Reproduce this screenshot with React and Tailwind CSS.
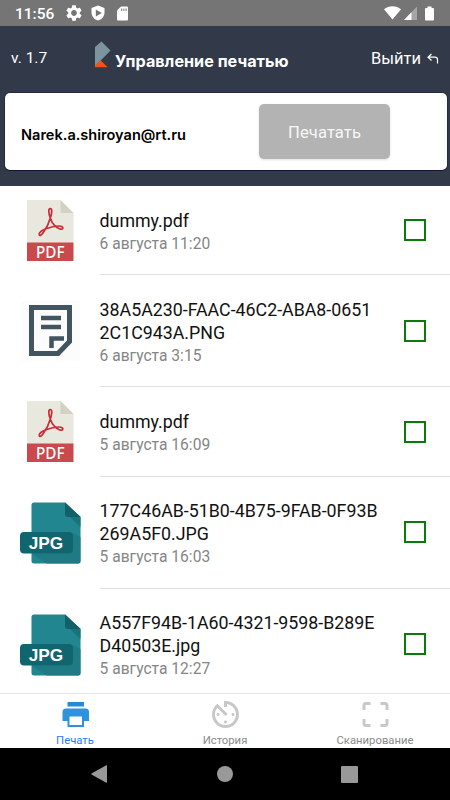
import { useState } from 'react';

const FILES = [
    { id: 1, type: 'pdf', lines: ['dummy.pdf'], date: '6 августа 11:20' },
    { id: 2, type: 'doc', lines: ['38A5A230-FAAC-46C2-ABA8-0651', '2C1C943A.PNG'], date: '6 августа 3:15' },
    { id: 3, type: 'pdf', lines: ['dummy.pdf'], date: '5 августа 16:09' },
    { id: 4, type: 'jpg', lines: ['177C46AB-51B0-4B75-9FAB-0F93B', '269A5F0.JPG'], date: '5 августа 16:03' },
    { id: 5, type: 'jpg', lines: ['A557F94B-1A60-4321-9598-B289E', 'D40503E.jpg'], date: '5 августа 12:27' },
];

function PdfIcon() {
    return (
        <svg className="w-[62px] h-[62px]" viewBox="0 0 62 62">
            <path d="M8 0H41.500L54.500 13V43H8z" fill="#e9e8df" />
            <path d="M41.500 0L54.500 13H41.500z" fill="#d2d1c2" />
            <path d="M8 42.500H54.500V61H8z" fill="#c9494c" />
            <path
                d="M31.300 18C29.500 13.500 29.200 8.500 31.200 8.500C33.500 8.500 33 13 31.300 18C30 23 26.500 29.500 24.300 32.500C22.500 35.300 20.800 36 20.300 34.800C19.500 32.800 23 30 27 28.700C31 27.200 36 26 39.500 26C43 26 44.300 27.200 43.700 28.500C42.800 30.200 38.500 28.300 35.800 25.700C33.500 23.500 32 20.300 31.300 18z"
                fill="none"
                stroke="#cb2c35"
                strokeWidth="1.700"
                strokeLinejoin="round"
            />
            <text x="31.200" y="57.800" textAnchor="middle" textLength="28.500" lengthAdjust="spacingAndGlyphs" fill="#fff" className="font-['Noto_Sans',sans-serif] text-[16px] font-medium">PDF</text>
        </svg>
    );
}

function DocIcon() {
    return (
        <svg className="w-[62px] h-[62px]" viewBox="0 0 62 62">
            <path d="M2 1H61V61H2z" fill="#fcfcfc" />
            <path d="M12.500 7.500H50.500V41.500L39 53.500H12.500z" fill="none" stroke="#41545f" strokeWidth="5" />
            <path d="M22 18H42M22 27H42M32.500 48V38.500H45" fill="none" stroke="#41545f" strokeWidth="4.500" />
        </svg>
    );
}

function JpgIcon() {
    return (
        <svg className="w-[62px] h-[62px]" viewBox="0 0 62 62">
            <path d="M15 0.500H46L61.500 15V59Q61.500 61.500 59 61.500H15Q12.500 61.500 12.500 59V3Q12.500 0.500 15 0.500z" fill="#21868f" />
            <path d="M54 31L61.500 35V59Q61.500 61.500 59 61.500H28L12.500 51.500H52Z" fill="#207a83" />
            <path d="M46 0.500L61.500 15V25L46.500 11z" fill="#1c727b" />
            <path d="M46 0.500L61.500 15H49Q46 15 46 12z" fill="#116069" />
            <rect x="1" y="30" width="53" height="21.500" rx="4" fill="#11656e" />
            <text x="27" y="46.700" textAnchor="middle" textLength="34.500" lengthAdjust="spacingAndGlyphs" fill="#fff" className="font-['Liberation_Sans',sans-serif] text-[17px] font-bold">JPG</text>
        </svg>
    );
}

const FILE_ICONS = { pdf: PdfIcon, doc: DocIcon, jpg: JpgIcon };

function StatusBar() {
    return (
        <div className="h-[26px] shrink-0 bg-[#757575] text-white flex items-center justify-between pl-[15px] pr-[16px]">
            <div className="flex items-center h-full">
                <span className="w-[51px] text-[15.5px] leading-[26px] font-medium pt-[2px]">11:56</span>
                <svg className="w-[16px] h-[16px] mr-[9px]" viewBox="2 2 20 20" fill="currentColor">
                    <path d="M19.140 12.940c.04-.3.06-.61.06-.94 0-.32-.02-.64-.07-.94l2.030-1.580c.18-.14.23-.41.12-.61l-1.920-3.320c-.12-.22-.37-.29-.59-.22l-2.390.96c-.5-.38-1.030-.7-1.620-.94l-.36-2.540c-.04-.24-.24-.41-.48-.41h-3.840c-.24 0-.43.17-.47.41l-.36 2.540c-.59.24-1.130.57-1.620.94l-2.390-.96c-.22-.08-.47 0-.59.22L2.740 8.870c-.12.21-.08.47.12.61l2.030 1.580c-.05.3-.09.63-.09.94s.02.64.07.94l-2.030 1.580c-.18.14-.23.41-.12.61l1.920 3.320c.12.22.37.29.59.22l2.390-.96c.5.38 1.030.7 1.620.94l.36 2.540c.05.24.24.41.48.41h3.840c.24 0 .44-.17.47-.41l.36-2.540c.59-.24 1.130-.56 1.620-.94l2.390.96c.22.08.47 0 .59-.22l1.920-3.320c.12-.22.07-.47-.12-.61l-2.010-1.580zM12 15.600c-1.980 0-3.600-1.620-3.600-3.600s1.620-3.600 3.600-3.600 3.600 1.620 3.600 3.600-1.620 3.600-3.600 3.600z" />
                </svg>
                <svg className="w-[14px] h-[16px] mr-[12px]" viewBox="0 0 14 16">
                    <path d="M7 0.500L13.500 3V7.500C13.500 11.500 10.500 14.600 7 15.500C3.500 14.600 0.500 11.500 0.500 7.500V3z" fill="#fff" />
                    <path d="M4.800 4.500L10.800 8L4.800 11.500z" fill="#757575" />
                </svg>
                <svg className="w-[11px] h-[15px]" viewBox="0 0 11 15">
                    <path d="M4 0.500H10Q11 0.500 11 1.500V13.500Q11 14.500 10 14.500H1Q0 14.500 0 13.500V4.500z" fill="#fff" />
                    <path d="M4.700 2.500V5M6.900 2.500V5M9.100 2.500V5" stroke="#757575" strokeWidth="1" />
                </svg>
            </div>
            <div className="flex items-center">
                <svg className="w-[17px] h-[14px] mr-[3px]" viewBox="0 0 17 14">
                    <path d="M0 3.200C4.800-0.700 12.200-0.700 17 3.200L8.500 13.500z" fill="#fff" />
                </svg>
                <svg className="w-[14px] h-[14px] mr-[7px]" viewBox="0 0 14 14">
                    <path d="M13 0.500V14H0z" fill="#a5a5a5" />
                    <path d="M7.500 6.300V14H0z" fill="#fff" />
                </svg>
                <svg className="w-[9px] h-[15px]" viewBox="0 0 9 15">
                    <path d="M2.500 0.500H6.500V2H8Q9 2 9 3V13.500Q9 14.500 8 14.500H1Q0 14.500 0 13.500V3Q0 2 1 2H2.500z" fill="#fff" />
                </svg>
            </div>
        </div>
    );
}

function Header() {
    return (
        <div className="h-[160px] shrink-0 bg-[#323949] pl-[5px] pr-[3px]">
            <div className="h-[67px] flex items-start text-white">
                <span className="w-[89px] pl-[6px] pt-[22px] text-[15.5px] leading-[20px]">v. 1.7</span>
                <svg className="w-[17px] h-[27px] mt-[15px]" viewBox="0 0 17 27">
                    <path d="M7.500 0.500L16.500 9.500L6.700 19.500L1 25.500V6z" fill="#7b949d" />
                    <path d="M6.700 19.300L13.500 26.300H1V25z" fill="#ff4e12" />
                </svg>
                <span className="w-[260px] pl-[4px] pt-[24px] font-['Inter',sans-serif] text-[16.2px] leading-[22px] font-bold whitespace-nowrap">Управление печатью</span>
                <button className="flex items-center pt-[22px] text-[16.5px] leading-[22px] whitespace-nowrap">
                    Выйти
                    <svg className="w-[12px] h-[12px] ml-[6px]" viewBox="0 0 12 12">
                        <path d="M4.500 1L1 4.200L4.500 7.500M1 4.200H8Q10.500 4.200 10.500 6.700V10.500" fill="none" stroke="#fff" strokeWidth="1.200" />
                    </svg>
                </button>
            </div>
            <div className="h-[77px] bg-white rounded-[5px] shadow-[0_0_0_1px_#10173a66,0_1px_0_#10173a] flex items-start">
                <span className="w-[254px] pl-[16px] pt-[32px] font-['Inter',sans-serif] text-[14.55px] leading-[20px] font-semibold text-black">Narek.a.shiroyan@rt.ru</span>
                <button className="w-[131px] h-[55px] mt-[11px] rounded-[5px] bg-[#b3b3b3] text-[#f7f7f7] text-[16.6px] leading-[24px] tracking-[0.1px] pt-[3px] shadow-sm">Печатать</button>
            </div>
        </div>
    );
}

function FileRow({ file, checked, onToggle }) {
    const Icon = FILE_ICONS[file.type];
    const isLong = file.lines.length > 1;

    return (
        <div className={`flex items-center pl-[19px] shrink-0 ${isLong ? 'h-[112px]' : 'h-[89.4px]'}`}>
            <Icon />
            <div className="ml-[18.6px] h-full flex-1 flex items-center border-b border-[#e0e0e0]">
                <div className="w-[304px] pt-[3px]">
                    {file.lines.map((line) => (
                        <p key={line} className="text-[17.8px] leading-[23px] text-[#111] whitespace-nowrap">{line}</p>
                    ))}
                    <p className="mt-px text-[15.6px] leading-[22px] text-[#858585]">{file.date}</p>
                </div>
                <button onClick={onToggle} className={`w-[22px] h-[22px] border-2 border-[#0b7a0b] ${checked ? 'bg-[#0b7a0b]' : 'bg-white'}`} />
            </div>
        </div>
    );
}

function PrintIcon() {
    return (
        <svg className="w-[27px] h-[27px]" viewBox="0 0 27 27">
            <path d="M5.500 1H22V5.500H5.500z" fill="#238cda" />
            <path d="M4 7.500H23.500Q27 7.500 27 11V20H22V26H5.500V20H0.500V11Q0.500 7.500 4 7.500z" fill="#2d93dc" />
            <path d="M7.500 15.500H20V24H7.500z" fill="#fff" />
        </svg>
    );
}

function HistoryIcon() {
    return (
        <svg className="w-[27px] h-[27px]" viewBox="3 3 18 18" fill="#c8c8c8">
            <path d="M11 17c0 .55.45 1 1 1s1-.45 1-1-.45-1-1-1-1 .45-1 1zm0-14v4h2V5.080c3.390.49 6 3.390 6 6.920 0 3.870-3.130 7-7 7s-7-3.130-7-7c0-1.680.59-3.220 1.580-4.420L12 13l1.410-1.410-6.800-6.800v.02C4.420 6.450 3 9.050 3 12c0 4.970 4.020 9 9 9 4.970 0 9-4.030 9-9s-4.030-9-9-9h-1zm7 9c0-.55-.45-1-1-1s-1 .45-1 1 .45 1 1 1 1-.45 1-1zM6 12c0 .55.45 1 1 1s1-.45 1-1-.45-1-1-1-1 .45-1 1z" />
        </svg>
    );
}

function ScanIcon() {
    return (
        <svg className="w-[27px] h-[27px]" viewBox="0 0 27 27" fill="none" stroke="#c8c8c8" strokeWidth="3">
            <path d="M2 9V4.500Q2 2.500 4 2.500H8.500M18.500 2.500H23Q25 2.500 25 4.500V9M25 18V22.500Q25 24.500 23 24.500H18.500M8.500 24.500H4Q2 24.500 2 22.500V18" />
        </svg>
    );
}

const TABS = [
    { id: 'print', label: 'Печать', icon: PrintIcon },
    { id: 'history', label: 'История', icon: HistoryIcon },
    { id: 'scan', label: 'Сканирование', icon: ScanIcon },
];

export default function App() {
    const [selected, setSelected] = useState([]);
    const [tab, setTab] = useState('print');

    const toggle = (id) => {
        setSelected(selected.includes(id) ? selected.filter((s) => s !== id) : [...selected, id]);
    };

    return (
        <div className="w-[450px] h-[800px] overflow-hidden bg-white flex flex-col font-['Roboto',sans-serif]">
            <StatusBar />
            <Header />

            {/* file list */}
            <div className="h-[507px] shrink-0 overflow-hidden flex flex-col">
                {FILES.map((file) => (
                    <FileRow key={file.id} file={file} checked={selected.includes(file.id)} onToggle={() => toggle(file.id)} />
                ))}
            </div>

            {/* bottom tabs */}
            <div className="h-[55px] shrink-0 bg-white border-t border-[#e6e6e6] grid grid-cols-3">
                {TABS.map(({ id, label, icon: Icon }) => (
                    <button key={id} onClick={() => setTab(id)} className="flex flex-col items-center pt-[7px]">
                        <Icon />
                        <span className={`mt-[6px] text-[11.3px] leading-[14px] ${tab === id ? 'text-[#1f7cf8]' : 'text-[#8a8a8a]'}`}>{label}</span>
                    </button>
                ))}
            </div>

            {/* system navigation */}
            <div className="h-[52px] shrink-0 bg-black flex items-center justify-between pl-[91px] pr-[92px]">
                <svg className="w-[16px] h-[18px]" viewBox="0 0 16 18"><path d="M16 0.500V17.500Q16 18 15.300 17.700L0.500 9.400Q0 9 0.500 8.600L15.300 0.300Q16 0 16 0.500z" fill="#999" /></svg>
                <span className="w-[16px] h-[16px] ml-[1px] rounded-full bg-[#999]" />
                <span className="w-[17px] h-[17px] rounded-[1px] bg-[#999]" />
            </div>
        </div>
    );
}
